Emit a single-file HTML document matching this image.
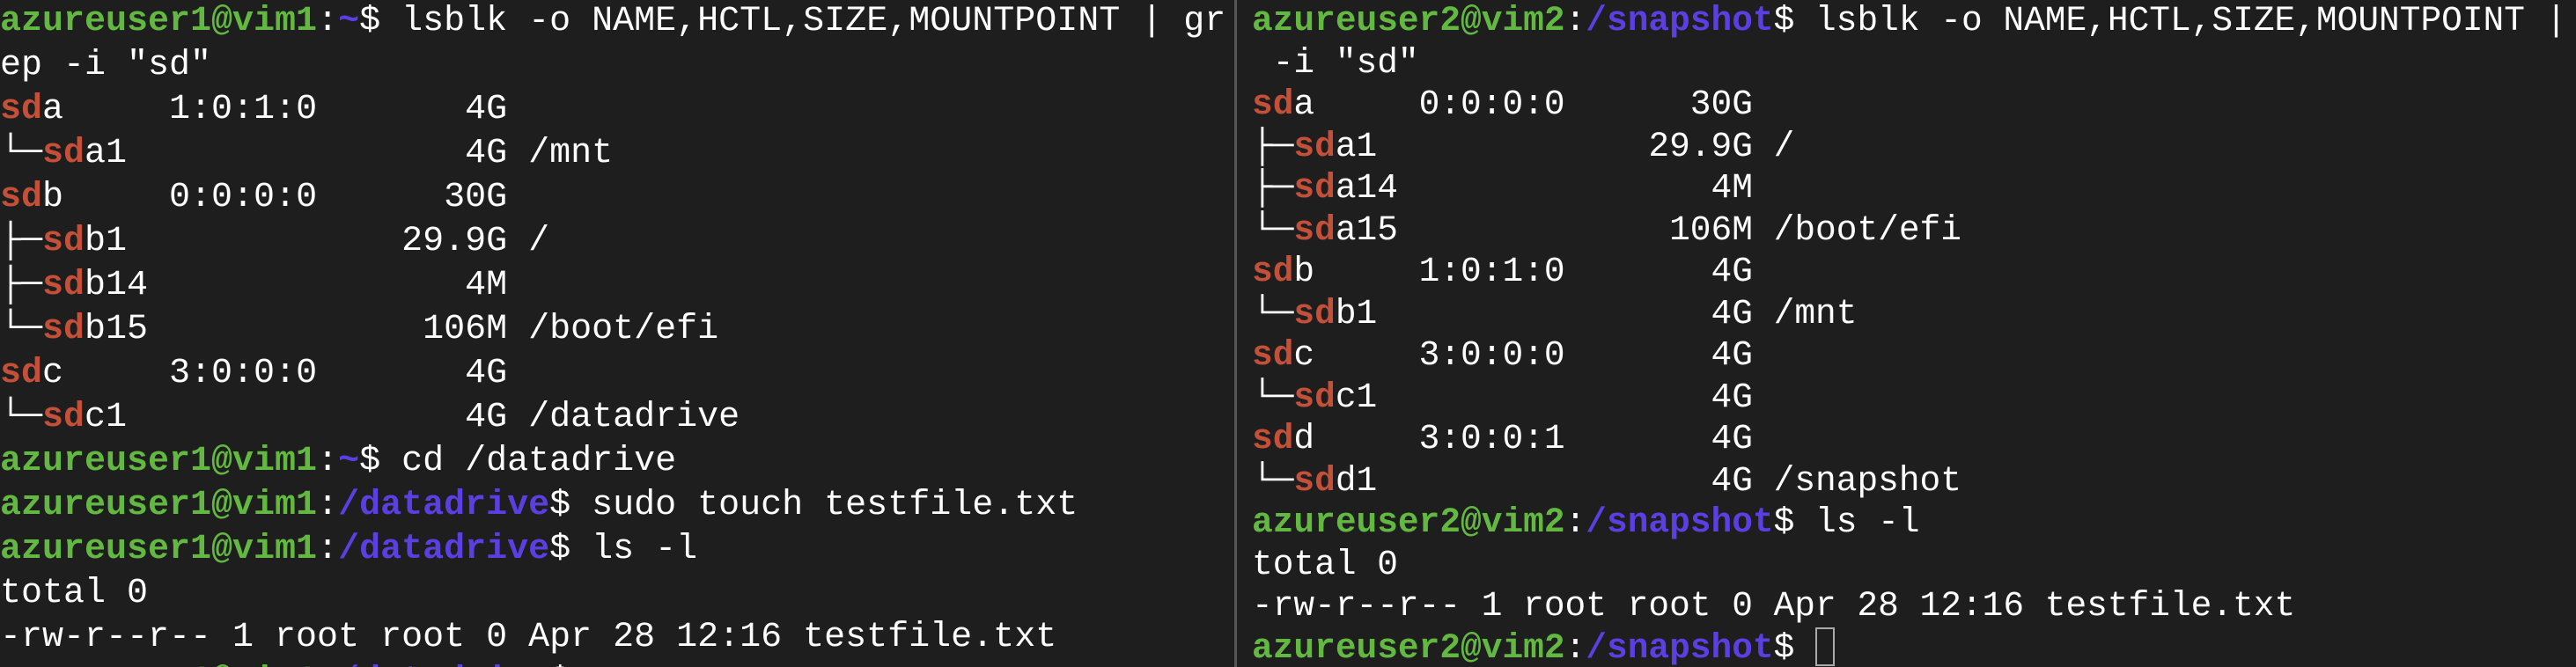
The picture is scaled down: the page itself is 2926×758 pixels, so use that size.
<!DOCTYPE html>
<html><head><meta charset="utf-8"><style>
html,body{margin:0;padding:0;background:#1e1e1e;width:2926px;height:758px;overflow:hidden}
.pane{position:absolute;top:0;overflow:hidden;white-space:pre;font-family:"Liberation Mono","DejaVu Sans Mono",monospace;color:#fff;font-size:40px}
#l{left:0;width:1400px;height:758px;line-height:50px}
#r{left:1422px;width:1504px;height:758px;line-height:47.5px;font-size:39.5px}
#div{position:absolute;left:1402px;top:0;width:3px;height:758px;background:#555}
.g{color:#63b842;font-weight:bold}
.p{color:#5b3fe3;font-weight:bold}
.s{color:#c5503a;font-weight:bold}
.c1{display:inline-block;width:22px;height:14px;background:#aaa;vertical-align:-14px}
.c2{display:inline-block;width:22px;height:44px;border:2px solid #aaa;box-sizing:border-box;vertical-align:-10px}
</style></head><body>
<div id="l" class="pane"><span class="g">azureuser1@vim1</span>:<span class="p">~</span>$ lsblk -o NAME,HCTL,SIZE,MOUNTPOINT | gr
ep -i "sd"
<span class="s">sd</span>a     1:0:1:0       4G
└─<span class="s">sd</span>a1                4G /mnt
<span class="s">sd</span>b     0:0:0:0      30G
├─<span class="s">sd</span>b1             29.9G /
├─<span class="s">sd</span>b14               4M
└─<span class="s">sd</span>b15             106M /boot/efi
<span class="s">sd</span>c     3:0:0:0       4G
└─<span class="s">sd</span>c1                4G /datadrive
<span class="g">azureuser1@vim1</span>:<span class="p">~</span>$ cd /datadrive
<span class="g">azureuser1@vim1</span>:<span class="p">/datadrive</span>$ sudo touch testfile.txt
<span class="g">azureuser1@vim1</span>:<span class="p">/datadrive</span>$ ls -l
total 0
-rw-r--r-- 1 root root 0 Apr 28 12:16 testfile.txt
<span class="g">azureuser1@vim1</span>:<span class="p">/datadrive</span>$ <span class="c1"></span></div>
<div id="div"></div>
<div id="r" class="pane"><span class="g">azureuser2@vim2</span>:<span class="p">/snapshot</span>$ lsblk -o NAME,HCTL,SIZE,MOUNTPOINT | grep
 -i "sd"
<span class="s">sd</span>a     0:0:0:0      30G
├─<span class="s">sd</span>a1             29.9G /
├─<span class="s">sd</span>a14               4M
└─<span class="s">sd</span>a15             106M /boot/efi
<span class="s">sd</span>b     1:0:1:0       4G
└─<span class="s">sd</span>b1                4G /mnt
<span class="s">sd</span>c     3:0:0:0       4G
└─<span class="s">sd</span>c1                4G
<span class="s">sd</span>d     3:0:0:1       4G
└─<span class="s">sd</span>d1                4G /snapshot
<span class="g">azureuser2@vim2</span>:<span class="p">/snapshot</span>$ ls -l
total 0
-rw-r--r-- 1 root root 0 Apr 28 12:16 testfile.txt
<span class="g">azureuser2@vim2</span>:<span class="p">/snapshot</span>$ <span class="c2"></span></div>
</body></html>
